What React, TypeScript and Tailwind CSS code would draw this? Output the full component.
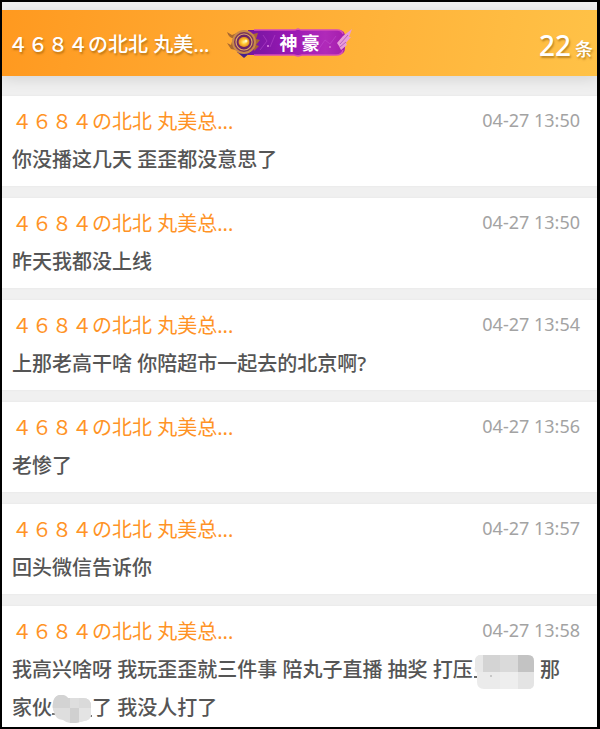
type Message = {
  id: number;
  time: string;
  parts: string[];
};

// "#long" and "#short" are the masked names inside a message
const messages: Message[] = [
  { id: 1, time: "04-27 13:50", parts: ["你没播这几天 歪歪都没意思了"] },
  { id: 2, time: "04-27 13:50", parts: ["昨天我都没上线"] },
  { id: 3, time: "04-27 13:54", parts: ["上那老高干啥 你陪超市一起去的北京啊?"] },
  { id: 4, time: "04-27 13:56", parts: ["老惨了"] },
  { id: 5, time: "04-27 13:57", parts: ["回头微信告诉你"] },
  {
    id: 6,
    time: "04-27 13:58",
    parts: [
      "我高兴啥呀 我玩歪歪就三件事 陪丸子直播 抽奖 打压",
      "#long",
      " 那",
      "家伙",
      "#short",
      "了 我没人打了",
    ],
  },
];

function LongMask() {
  return (
    <svg width="60" height="34" viewBox="0 0 60 34" className="mx-px inline-block align-middle" aria-hidden="true">
      <defs>
        <clipPath id="longMask">
          <path d="M7 0h47q6 0 6 6v22q0 6-6 6H10q-7 0-7-7V18Q0 16 1 12V5Q2 0 7 0Z" />
        </clipPath>
      </defs>
      <path d="M0 21h4v2H0z" fill="#666" />
      <g clipPath="url(#longMask)">
        <path d="M0 0h60v34H0z" fill="#ebebeb" />
        <path d="M0 0h9v17H0z" fill="#e8e8e8" />
        <path d="M9 0h17v17H9z" fill="#d4d4d4" />
        <path d="M26 0h18v17H26z" fill="#dadada" />
        <path d="M44 0h16v17H44z" fill="#c3c3c3" />
        <path d="M26 17h18v17H26z" fill="#eeeeee" />
        <path d="M44 17h16v17H44z" fill="#e4e4e4" />
      </g>
      <circle cx="17" cy="21" r="1" fill="#bbb" />
    </svg>
  );
}

function ShortMask() {
  return (
    <svg width="40" height="28" viewBox="0 0 40 28" className="inline-block align-middle" aria-hidden="true">
      <defs>
        <clipPath id="shortMask">
          <path d="M7 0Q13-1 16 3h15q8 0 8 8v8q0 6-7 7l-8 2q-8 1-13-3-8-1-9-8Q0 14 1 8 2 1 7 0Z" />
        </clipPath>
      </defs>
      <path d="M0 18h3v2H0zM37 20h3v2h-3z" fill="#777" />
      <g clipPath="url(#shortMask)">
        <path d="M0-1h40v30H0z" fill="#dedede" />
        <path d="M0-1h18v14H0z" fill="#d3d3d3" />
        <path d="M18 13h9v16h-9z" fill="#d0d0d0" />
        <path d="M27 0h13v13H27z" fill="#dadada" />
        <path d="M27 13h13v16H27z" fill="#e4e4e4" />
      </g>
    </svg>
  );
}

function RankBadge() {
  return (
    <div className="relative mb-1 h-8 w-[126px]">
      <svg viewBox="0 0 126 32" className="block h-8 w-[126px]" aria-hidden="true">
        <defs>
          <linearGradient id="bar" x1="0" x2="1">
            <stop offset="0" stopColor="#7416a0" />
            <stop offset="0.45" stopColor="#9a18b4" />
            <stop offset="0.8" stopColor="#b02ab9" />
            <stop offset="1" stopColor="#a41dac" />
          </linearGradient>
          <radialGradient id="gem">
            <stop offset="0" stopColor="#fff3a0" />
            <stop offset="0.5" stopColor="#ffc52e" />
            <stop offset="1" stopColor="#e08e20" />
          </radialGradient>
        </defs>
        <path d="M22 3h90q7 0 7 6v12q0 7-8 7H22z" fill="url(#bar)" />
        <path d="M28 3h41l3-1 3 1h36q5 0 6 4M28 28h40l4 1 4-1h34q6 0 7-5" fill="none" stroke="#d74bb8" strokeWidth="1.3" />
        <path d="M34 23l7-9-4-6M92 23l7-10 5 4 6-8M49 8l-5 12" fill="none" stroke="#c75ad6" strokeWidth="0.8" opacity="0.5" />
        <circle cx="42" cy="19" r="1" fill="#e38cea" />
        <circle cx="104" cy="20" r="0.8" fill="#f4b2ea" />
        {/* wing on the right */}
        <path d="m111 16 6-7 9-7-3 8h2l-5 6 1 2-6 5-2-4z" fill="#e89bd8" />
        <path d="m114 17 8-9m-8 12 6-5" stroke="#b058bd" strokeWidth="0.9" />
        {/* gold ring and its horns */}
        <path d="M1 5q2 6 6 6L5 18l-4-2 4 6 5 1 1-17-5 2zM32 6l-5 1 1 17 5-5-3-1 4-5-4-1z" fill="#a96830" />
        <path d="m11 25 7 6 7-6z" fill="#46228b" />
        <circle cx="18" cy="15" r="11" fill="#7b365c" stroke="#c98a4a" strokeWidth="2" />
        <circle cx="18" cy="15" r="8" fill="#6c2465" stroke="#dda766" strokeWidth="1.2" />
        <ellipse cx="18" cy="15" rx="5.5" ry="5" fill="url(#gem)" />
        <circle cx="20" cy="14" r="1.5" fill="#fff7c5" />
      </svg>
      <span className="absolute inset-y-0 left-[54px] flex items-center gap-1 text-[18px] leading-none font-bold text-white">
        <span>神</span>
        <span>豪</span>
      </span>
    </div>
  );
}

function MessageCard({ message }: { message: Message }) {
  return (
    <li className="bg-white pt-[7px] pr-[17px] pb-2 pl-[10px] shadow-[0_0_2px_rgba(0,0,0,0.06)] last:flex-1 last:pb-0">
      <div className="flex h-[38px] items-center justify-between">
        <h2 className="text-[20px] leading-9 text-[#ff9326]">４６８４の北北 丸美总...</h2>
        <time className="pb-1 text-[18px] leading-7 text-[#a3a3a3]">{message.time}</time>
      </div>
      <p className="pr-2 text-[20px] leading-[37px] font-medium text-[#555]">
        {message.parts.map((part, index) => {
          if (part === "#long") return <LongMask key={index} />;
          if (part === "#short") return <ShortMask key={index} />;
          return <span key={index}>{part}</span>;
        })}
      </p>
    </li>
  );
}

export default function App() {
  return (
    <main
      lang="zh-CN"
      className="flex min-h-screen flex-col border-2 border-r-[3px] border-black bg-[#f0f0f0] pt-2 font-['Noto_Sans','Noto_Sans_CJK_SC',sans-serif]"
    >
      <header className="flex h-[66px] items-center justify-between bg-linear-100 from-[#ff991f] to-[#ffc247] pt-[3px] pr-1 pl-[6px] text-white shadow-[0_3px_14px_rgba(0,0,0,0.12)]">
        <div className="flex items-center gap-4">
          <h1 className="text-[20px] leading-8 font-medium text-shadow-[1px_2px_2px_rgba(130,80,0,0.5)]">
            ４６８４の北北 丸美...
          </h1>
          <RankBadge />
        </div>
        <p className="flex items-baseline gap-1 font-medium text-shadow-[1px_2px_2px_rgba(130,80,0,0.5)]">
          <span className="text-[28px] leading-9">22</span>
          <span className="text-[18px]">条</span>
        </p>
      </header>
      <ul className="mt-5 flex flex-1 flex-col gap-3">
        {messages.map((message) => (
          <MessageCard key={message.id} message={message} />
        ))}
      </ul>
    </main>
  );
}
